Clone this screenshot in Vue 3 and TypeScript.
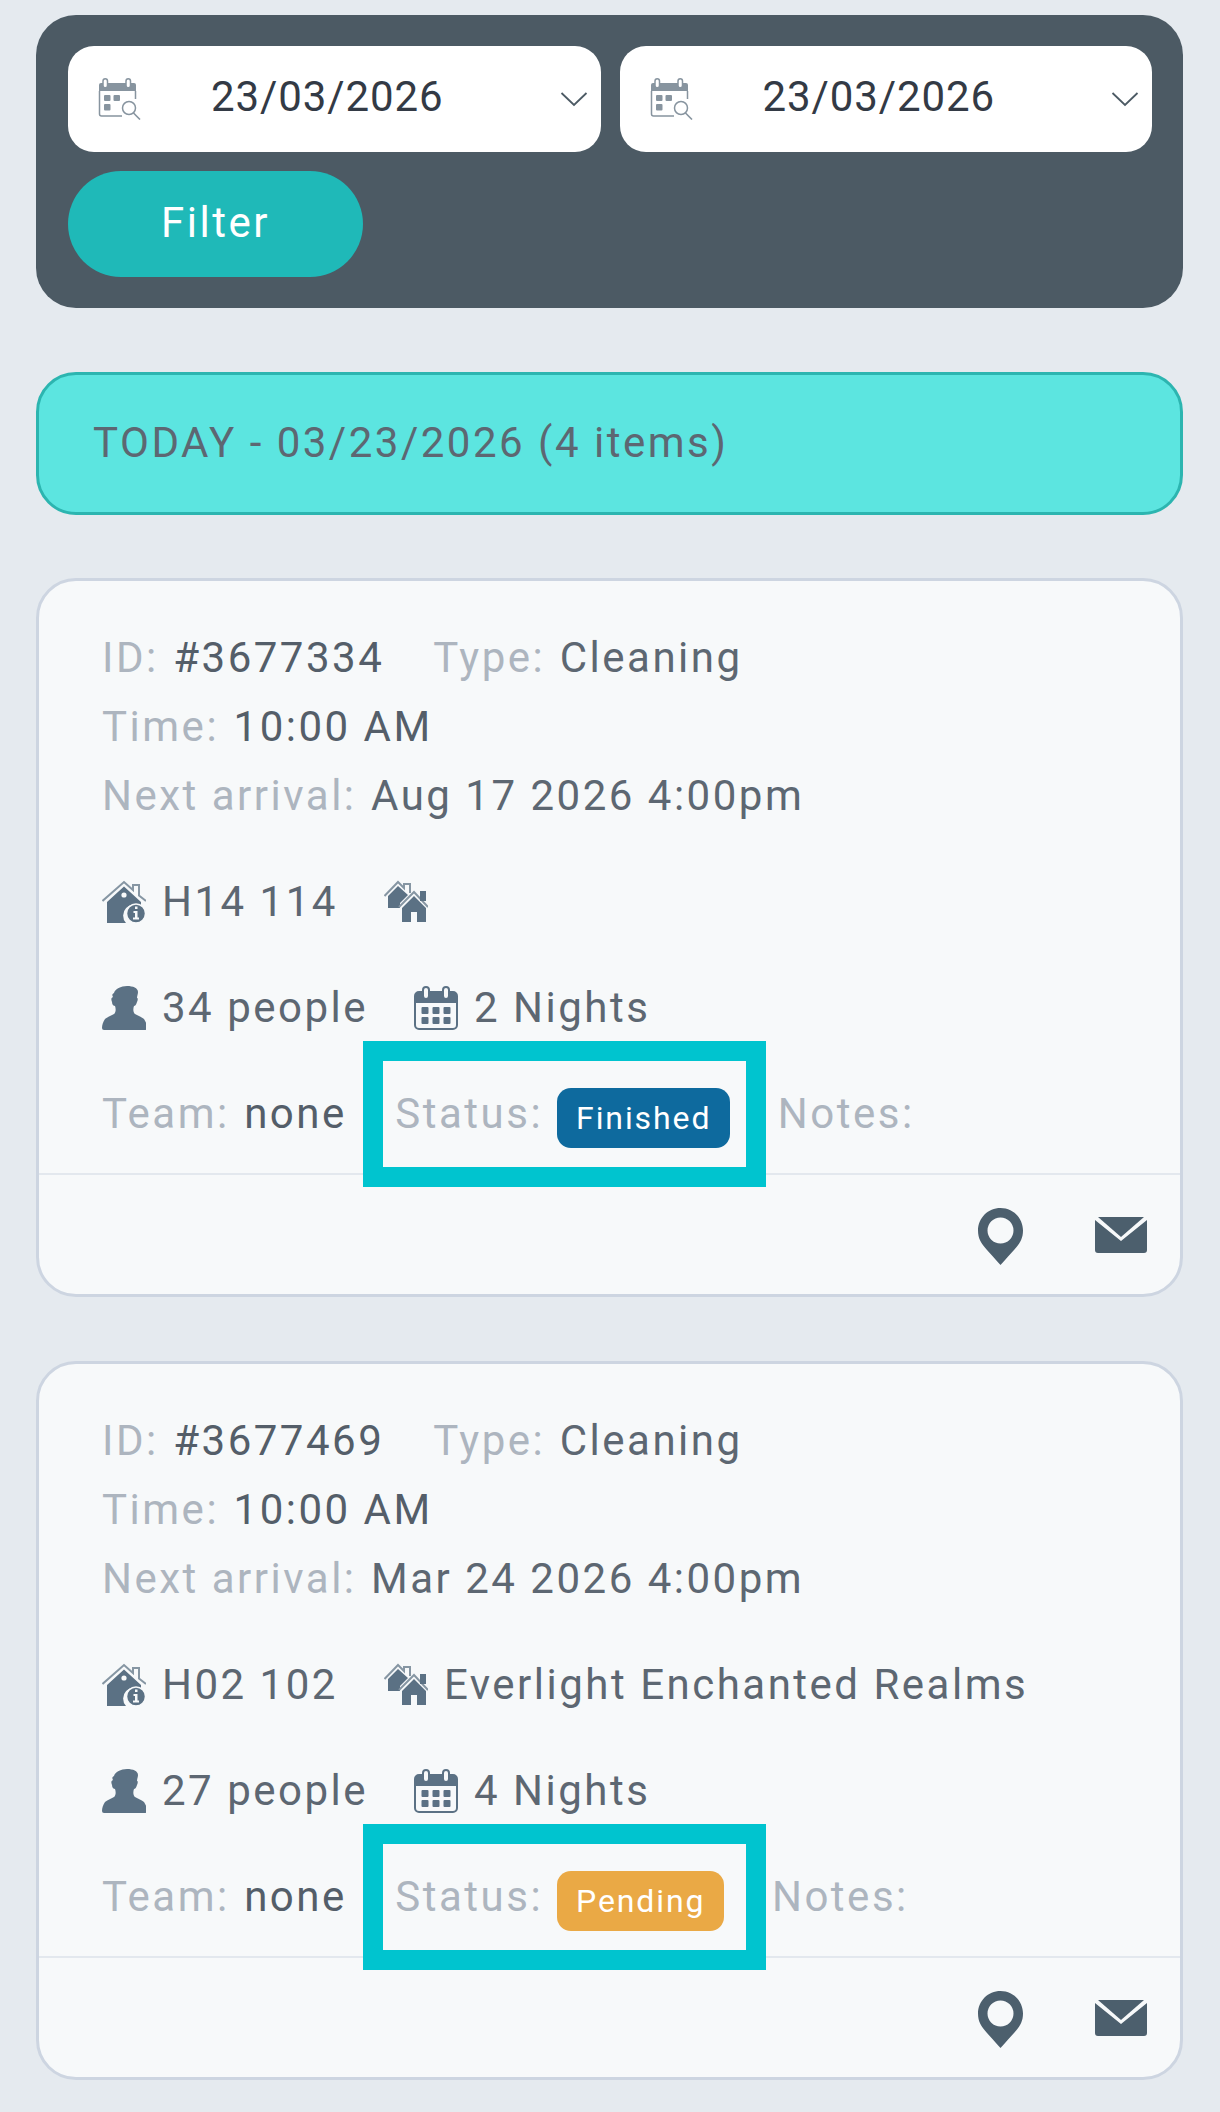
<script setup lang="ts">
interface Task {
  id: string
  time: string
  nextArrival: string
  unit: string
  complex: string
  people: number
  nights: number
  team: string
  status: 'Finished' | 'Pending'
}

const dates = ['23/03/2026', '23/03/2026']

const tasks: Task[] = [
  {
    id: '#3677334',
    time: '10:00 AM',
    nextArrival: 'Aug 17 2026 4:00pm',
    unit: 'H14 114',
    complex: '',
    people: 34,
    nights: 2,
    team: 'none',
    status: 'Finished',
  },
  {
    id: '#3677469',
    time: '10:00 AM',
    nextArrival: 'Mar 24 2026 4:00pm',
    unit: 'H02 102',
    complex: 'Everlight Enchanted Realms',
    people: 27,
    nights: 4,
    team: 'none',
    status: 'Pending',
  },
]
</script>

<template>
  <div class="page">
    <section class="filter-panel">
      <div class="date-row">
        <div v-for="(date, i) in dates" :key="i" class="date-field">
          <svg class="date-icon" viewBox="0 0 44 42" fill="none">
            <path d="M1 7a2 2 0 0 1 2-2h33a2 2 0 0 1 2 2v6H1z" fill="#87949f" />
            <rect x="5" y="0.800" width="4.500" height="9" rx="2.250" fill="#fff" stroke="#87949f" stroke-width="1.500" />
            <rect x="28" y="0.800" width="4.500" height="9" rx="2.250" fill="#fff" stroke="#87949f" stroke-width="1.500" />
            <path d="M1.500 13v23a2 2 0 0 0 2 2H24M37.500 13v8" stroke="#87949f" stroke-width="1.500" />
            <rect x="6" y="17" width="6.500" height="6" rx="1" fill="#87949f" />
            <rect x="15.500" y="17" width="6.500" height="6" rx="1" fill="#87949f" />
            <rect x="6" y="26" width="6.500" height="6.500" rx="1" fill="#87949f" />
            <circle cx="31" cy="30" r="6.500" stroke="#87949f" stroke-width="1.500" />
            <path d="M35.500 35 42 41.500" stroke="#87949f" stroke-width="1.600" />
          </svg>
          <span class="date-text">{{ date }}</span>
          <svg class="chevron" viewBox="0 0 28 16" fill="none">
            <path d="M1.500 2 14 14 26.500 2" stroke="#4c5a64" stroke-width="1.800" />
          </svg>
        </div>
      </div>
      <button class="filter-btn" type="button">Filter</button>
    </section>

    <div class="day-banner">TODAY - 03/23/2026 (4 items)</div>

    <article v-for="task in tasks" :key="task.id" class="task-card">
      <div class="card-body">
        <div class="line">
          <span class="item"><span class="label">ID:</span><span class="dark">{{ task.id }}</span></span>
          <span class="item"><span class="label">Type:</span><span>Cleaning</span></span>
        </div>
        <div class="line">
          <span class="item"><span class="label">Time:</span><span class="dark">{{ task.time }}</span></span>
        </div>
        <div class="line">
          <span class="item"><span class="label">Next arrival:</span><span>{{ task.nextArrival }}</span></span>
        </div>

        <div class="line icon-line">
          <span class="icon-item">
            <svg class="icon" viewBox="0 0 44 42">
              <path d="M0.500 20 22 1l9 8V4h6v10.500l7 5.500" fill="none" stroke="#8696a3" stroke-width="2" />
              <path d="M5 21 22 5.500 39 21v5a11 11 0 0 0-15 16H5z" fill="#5b7184" />
              <circle cx="22" cy="14" r="2.600" fill="#f7f9fa" />
              <circle cx="34" cy="32.500" r="9.500" fill="#5b7184" stroke="#f7f9fa" stroke-width="1.500" />
              <path d="M33 25.500h2.500v2.500H33zM31.500 30h4v6.500h1.500v2h-6v-2H33V32h-1.500z" fill="#f7f9fa" />
            </svg>
            <span>{{ task.unit }}</span>
          </span>
          <span class="icon-item">
            <svg class="icon" viewBox="0 0 44 42">
              <path d="M0.500 15 14 1l6 6V3h6v9" fill="none" stroke="#8696a3" stroke-width="2" />
              <path d="M4 15 14 5l10 9-8 8v5H4z" fill="#5b7184" />
              <path d="M15 26 30 11l14 15" fill="none" stroke="#8696a3" stroke-width="2" />
              <path d="M18 27 30 15l12 12v14H33V31h-6v10h-9z" fill="#5b7184" />
              <path d="M36 10h6v10h-6z" fill="#5b7184" />
            </svg>
            <span>{{ task.complex }}</span>
          </span>
        </div>

        <div class="line icon-line">
          <span class="icon-item">
            <svg class="icon" viewBox="0 0 44 44">
              <path d="M12 7c1-4 7-7 13-7 6 0 11 2 11 6 0 2-1 4-1 6 1 0 1 2 0 4-1 3-2 4-3 4-1 3-1 6 1 8 3 2 7 3 9 5 2 3 3 6 3 9a2 2 0 0 1-2 2H2a2 2 0 0 1-2-2c0-3 1-6 3-9 2-2 6-3 9-5 2-2 2-5 1-8-1 0-3-1-3-4-1-3-1-4 1-5-1-2-1-3 1-4z" fill="#5b7184" />
            </svg>
            <span>{{ task.people }} people</span>
          </span>
          <span class="icon-item">
            <svg class="icon" viewBox="0 0 44 44">
              <path d="M1 10a4 4 0 0 1 4-4h34a4 4 0 0 1 4 4v7H1z" fill="#5b7184" />
              <rect x="1" y="6" width="42" height="37" rx="4" fill="none" stroke="#5b7184" stroke-width="2" />
              <rect x="9" y="1" width="6" height="12" rx="3" fill="#f7f9fa" stroke="#5b7184" stroke-width="2" />
              <rect x="29" y="1" width="6" height="12" rx="3" fill="#f7f9fa" stroke="#5b7184" stroke-width="2" />
              <g fill="#5b7184">
                <rect x="7.500" y="21" width="7" height="7" rx="1" />
                <rect x="18.500" y="21" width="7" height="7" rx="1" />
                <rect x="29.500" y="21" width="7" height="7" rx="1" />
                <rect x="7.500" y="31" width="7" height="7" rx="1" />
                <rect x="18.500" y="31" width="7" height="7" rx="1" />
                <rect x="29.500" y="31" width="7" height="7" rx="1" />
              </g>
            </svg>
            <span>{{ task.nights }} Nights</span>
          </span>
        </div>

        <div class="line status-line">
          <span class="item"><span class="label">Team:</span><span class="dark">{{ task.team }}</span></span>
          <span class="status-item">
            <span class="label">Status:</span>
            <span class="badge" :class="task.status.toLowerCase()">{{ task.status }}</span>
            <span class="highlight"></span>
          </span>
          <span class="label">Notes:</span>
        </div>
      </div>

      <footer class="card-footer">
        <svg class="pin" viewBox="0 0 45 57">
          <path fill-rule="evenodd" d="M22.500 0C35 0 45 10 45 22.500c0 8-3 13-9 19.500-4 4.500-9 10-13.500 15C18 52 13 46.500 9 42 3 35.500 0 30.500 0 22.500 0 10 10 0 22.500 0zm0 9.500a13 13 0 1 0 0 26 13 13 0 0 0 0-26z" fill="#4c5f6d" />
        </svg>
        <svg class="mail" viewBox="0 0 52 36">
          <path d="M3 0h46L26 20z" fill="#4c5f6d" />
          <path d="M0 3v30a3 3 0 0 0 3 3h46a3 3 0 0 0 3-3V3L26 24z" fill="#4c5f6d" />
        </svg>
      </footer>
    </article>
  </div>
</template>

<style>
body {
  background: #e5eaef;
}
</style>

<style scoped>
.page {
  box-sizing: border-box;
  width: 1220px;
  height: 2112px;
  padding: 15px 37px 0 36px;
  background: #e5eaef;
  font-family: Roboto, "Liberation Sans", sans-serif;
  font-size: 42px;
  letter-spacing: 2.5px;
  color: #5d6772;
  overflow: hidden;
}

.filter-panel {
  box-sizing: border-box;
  height: 293px;
  padding: 31px 31px 31px 32px;
  background: #4c5a64;
  border-radius: 40px;
}

.date-row {
  display: flex;
  gap: 19px;
  margin-bottom: 19px;
}

.date-field {
  flex: 1;
  display: flex;
  align-items: center;
  height: 106px;
  padding: 0 13px 0 30px;
  background: #fff;
  border-radius: 26px;
}

.date-icon {
  width: 44px;
  height: 42px;
}

.date-text {
  flex: 1;
  margin-left: 69px;
  margin-top: -6px;
  color: #333a45;
  letter-spacing: 0.9px;
}

.chevron {
  width: 28px;
  height: 16px;
}

.filter-btn {
  display: block;
  width: 295px;
  height: 106px;
  padding: 0 0 4px;
  background: #1fb9b8;
  border: 0;
  border-radius: 53px;
  color: #fff;
  font: inherit;
  letter-spacing: 2.5px;
}

.day-banner {
  box-sizing: border-box;
  display: flex;
  align-items: center;
  height: 143px;
  margin-top: 64px;
  padding: 0 0 3px 54px;
  background: #5ce5e0;
  border: 3px solid #2cb5b0;
  border-radius: 40px;
}

.task-card {
  box-sizing: border-box;
  height: 719px;
  margin-top: 64px;
  background: #f7f9fa;
  border: 3px solid #cdd5e1;
  border-radius: 40px;
}

.day-banner + .task-card {
  margin-top: 63px;
}

.card-body {
  box-sizing: border-box;
  height: 594px;
  padding: 42px 0 0 63px;
  border-bottom: 2px solid #e3e8ee;
}

.line {
  display: flex;
  align-items: center;
  gap: 49px;
  height: 69px;
}

.item {
  display: flex;
  gap: 14.5px;
}

.label {
  color: #adb5bf;
}

.dark {
  color: #545e69;
}

.icon-line {
  gap: 46px;
  margin-top: 37px;
}

.icon-item {
  display: flex;
  align-items: center;
  gap: 16px;
}

.icon {
  width: 44px;
  height: 44px;
  flex-shrink: 0;
}

.status-line {
  gap: 48.500px;
  margin-top: 37px;
}

.status-item {
  position: relative;
  display: flex;
  align-items: center;
  gap: 14px;
  margin-right: -1px;
}

.badge {
  display: flex;
  align-items: center;
  justify-content: center;
  height: 60px;
  margin-top: 8px;
  padding: 0 19px;
  border-radius: 14px;
  color: #fff;
  font-size: 32px;
  letter-spacing: 1.9px;
}

.badge.finished {
  background: #0e6a9e;
}

.badge.pending {
  background: #eaa945;
}

.highlight {
  position: absolute;
  top: -39px;
  left: -32.500px;
  box-sizing: border-box;
  width: 403px;
  height: 146px;
  border: 20px solid #00c4cf;
  pointer-events: none;
}

.card-footer {
  display: flex;
  align-items: center;
  justify-content: flex-end;
  gap: 72px;
  height: 119px;
  padding: 0 33px 0 0;
}

.pin {
  width: 45px;
  height: 57px;
  margin-top: 4px;
}

.mail {
  width: 52px;
  height: 36px;
}
</style>
